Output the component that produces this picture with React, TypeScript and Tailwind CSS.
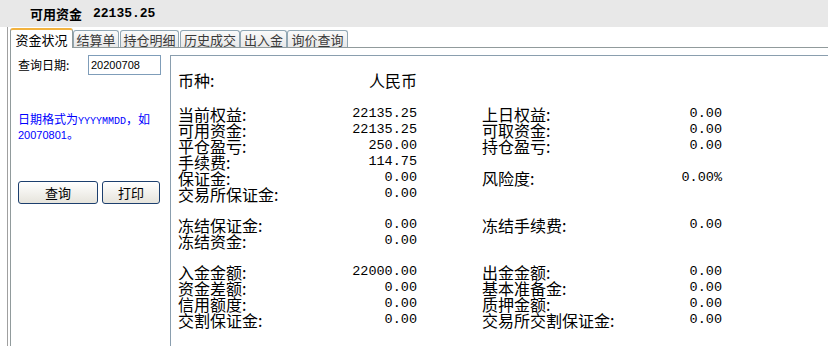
import React from "react";

const groupA: string[][] = [
  ["当前权益:", "22135.25", "上日权益:", "0.00"],
  ["可用资金:", "22135.25", "可取资金:", "0.00"],
  ["平仓盈亏:", "250.00", "持仓盈亏:", "0.00"],
  ["手续费:", "114.75", "", ""],
  ["保证金:", "0.00", "风险度:", "0.00%"],
  ["交易所保证金:", "0.00", "", ""],
];

const groupB: string[][] = [
  ["冻结保证金:", "0.00", "冻结手续费:", "0.00"],
  ["冻结资金:", "0.00", "", ""],
];

const groupC: string[][] = [
  ["入金金额:", "22000.00", "出金金额:", "0.00"],
  ["资金差额:", "0.00", "基本准备金:", "0.00"],
  ["信用额度:", "0.00", "质押金额:", "0.00"],
  ["交割保证金:", "0.00", "交易所交割保证金:", "0.00"],
];

const tabs = [
  { label: "结算单", w: "w-[46px]", gap: "" },
  { label: "持仓明细", w: "w-[59px]", gap: "ml-px" },
  { label: "历史成交", w: "w-[60px]", gap: "ml-px" },
  { label: "出入金", w: "w-[47px]", gap: "" },
  { label: "询价查询", w: "w-[61px]", gap: "" },
];

function Pair({ label, value, width }: { label: string; value: string; width: string }) {
  return (
    <div className={`flex justify-between ${width}`}>
      <span className="font-['Noto_Sans_CJK_SC',sans-serif] text-[16px] leading-4 text-black">{label}</span>
      <span className="font-['Liberation_Mono',monospace] text-[13.5px] leading-4 text-black">{value}</span>
    </div>
  );
}

function Group({ rows, className = "" }: { rows: string[][]; className?: string }) {
  return (
    <div className={className}>
      {rows.map((r, i) => (
        <div key={i} className="flex h-4">
          <Pair label={r[0]} value={r[1]} width="w-[239px]" />
          <div className="w-[65px]" />
          {r[2] ? <Pair label={r[2]} value={r[3]} width="w-[240px]" /> : null}
        </div>
      ))}
    </div>
  );
}

export default function App() {
  return (
    <div className="w-[828px] h-[346px] overflow-hidden bg-white flex flex-col">
      {/* title bar */}
      <div className="h-[27px] bg-[#e8e8e8] flex items-center pl-[30px] shrink-0">
        <span className="font-['Noto_Sans_CJK_SC',sans-serif] text-[13px] font-bold text-black leading-none">可用资金</span>
        <span className="ml-[11px] font-['Liberation_Mono',monospace] text-[13px] font-bold text-black leading-none">22135.25</span>
      </div>

      <div className="flex-1 ml-[7px] border-l border-[#a0a0a0] flex flex-col">
        {/* tab strip */}
        <div className="h-[20px] pl-[2px] flex items-end shrink-0">
          <div className="relative z-10 w-[63px] h-[20px] -mb-px bg-white border-t-2 border-t-[#f2b23e] border-x border-x-[#919b9c] rounded-t-[3px] flex items-center justify-center">
            <span className="font-['Noto_Sans_CJK_SC',sans-serif] text-[13px] leading-none text-black">资金状况</span>
          </div>
          {tabs.map((t) => (
            <div
              key={t.label}
              className={`${t.w} ${t.gap} h-[17px] bg-linear-to-b from-[#fafafa] to-[#e8e8e8] border border-b-0 border-[#91a7b4] rounded-t-[3px] flex items-center justify-center`}
            >
              <span className="font-['Noto_Sans_CJK_SC',sans-serif] text-[13px] leading-none text-[#3a3a3a]">{t.label}</span>
            </div>
          ))}
        </div>

        {/* tab panel */}
        <div className="flex-1 ml-[2px] border-l border-t border-[#919b9c] flex">
          {/* query form */}
          <div className="w-[159px] shrink-0 pt-[7px] pl-[7px] flex flex-col">
            <div className="flex items-center h-[20px]">
              <span className="w-[70px] font-['Noto_Sans_CJK_SC',sans-serif] text-[12px] leading-none text-black">查询日期:</span>
              <div className="w-[73px] h-[20px] border border-[#7f9db9] bg-white flex items-center pl-[2px]">
                <span className="font-['Liberation_Sans',sans-serif] text-[11px] leading-none text-black">20200708</span>
              </div>
            </div>
            <div className="mt-[38px] text-[#0000ff] text-[12px] leading-[12px] font-['Noto_Sans_CJK_SC',sans-serif]">
              <div>
                日期格式为<span className="font-['Liberation_Mono',monospace] text-[10px]">YYYYMMDD</span>，如
              </div>
              <div>
                <span className="font-['Liberation_Sans',sans-serif] text-[11px]">20070801</span>。
              </div>
            </div>
            <div className="mt-[40px] flex gap-[4px]">
              <button className="w-[80px] h-[23px] rounded-[3px] border border-[#1c3f6e] bg-linear-to-b from-white to-[#e6e4dc] flex items-center justify-center">
                <span className="font-['Noto_Sans_CJK_SC',sans-serif] text-[13px] leading-none text-black">查询</span>
              </button>
              <button className="w-[58px] h-[23px] rounded-[3px] border border-[#1c3f6e] bg-linear-to-b from-white to-[#e6e4dc] flex items-center justify-center">
                <span className="font-['Noto_Sans_CJK_SC',sans-serif] text-[13px] leading-none text-black">打印</span>
              </button>
            </div>
          </div>

          {/* account data */}
          <div className="flex-1 mt-[7px] border-l border-t border-[#8a9eae] pl-[7px] pt-[16px]">
            <div className="flex h-4 w-[239px] justify-between">
              <span className="font-['Noto_Sans_CJK_SC',sans-serif] text-[16px] leading-4 text-black">币种:</span>
              <span className="font-['Noto_Sans_CJK_SC',sans-serif] text-[16px] leading-4 text-black">人民币</span>
            </div>
            <Group rows={groupA} className="mt-[18px]" />
            <Group rows={groupB} className="mt-[15px]" />
            <Group rows={groupC} className="mt-[15px]" />
          </div>
        </div>
      </div>
    </div>
  );
}
